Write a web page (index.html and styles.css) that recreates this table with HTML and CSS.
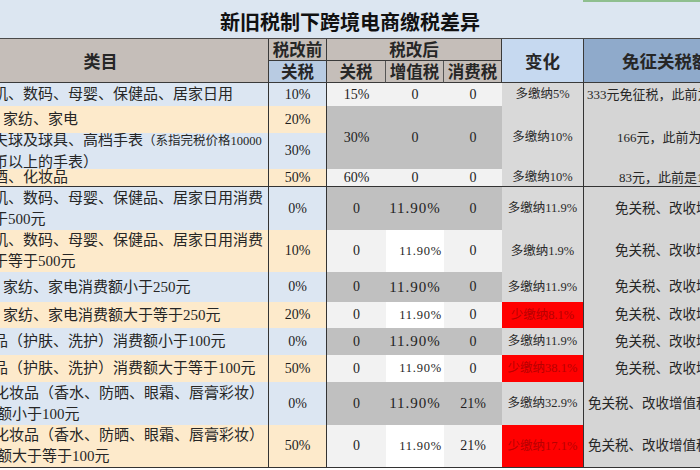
FILE: index.html
```html
<!DOCTYPE html>
<html lang="zh-CN">
<head>
<meta charset="utf-8">
<title>新旧税制下跨境电商缴税差异</title>
<link rel="stylesheet" href="styles.css">
</head>
<body>
<div class="title">新旧税制下跨境电商缴税差异</div>
<div class="sheet">
  <div class="h h-cat">类目</div>
  <div class="h h-grp">税改前</div>
  <div class="h h-grp h-new">税改后</div>
  <div class="h h-chg">变化</div>
  <div class="h h-free">免征关税额度</div>
  <div class="h h-sub h-old">关税</div>
  <div class="h h-sub">关税</div>
  <div class="h h-sub">增值税</div>
  <div class="h h-sub h-last">消费税</div>

  <!-- row 1 -->
  <div class="c cat blue"><span class="ln">手机、数码、母婴、保健品、居家日用</span></div>
  <div class="c old blue">10%</div>
  <div class="c n l">15%</div>
  <div class="c n l">0</div>
  <div class="c n l">0</div>
  <div class="c chg">多缴纳5%</div>
  <div class="c free f-a">333元免征税，此前为500元</div>

  <!-- row 2 -->
  <div class="c cat yel"><span class="ln ln-b">服装、家纺、家电</span></div>
  <div class="c old yel">20%</div>
  <div class="c n g span2">30%</div>
  <div class="c n g span2">0</div>
  <div class="c n g span2">0</div>
  <div class="c chg span2">多缴纳10%</div>
  <div class="c free f-b span2">166元，此前为250元</div>

  <!-- row 3 -->
  <div class="c cat blue"><span class="ln ln-c">高尔夫球及球具、高档手表<small class="note">（系指完税价格10000</small></span><span class="ln">民币以上的手表）</span></div>
  <div class="c old blue">30%</div>

  <!-- row 4 -->
  <div class="c cat yel sep"><span class="ln">烟酒、化妆品</span></div>
  <div class="c old yel sep">50%</div>
  <div class="c n l sep">60%</div>
  <div class="c n l sep">0</div>
  <div class="c n l sep">0</div>
  <div class="c chg sep">多缴纳10%</div>
  <div class="c free f-c sep">83元，此前是100元</div>

  <!-- row 5 -->
  <div class="c cat blue"><span class="ln">手机、数码、母婴、保健品、居家日用消费</span><span class="ln">小于500元</span></div>
  <div class="c old blue">0%</div>
  <div class="c n g">0</div>
  <div class="c n g big">11.90%</div>
  <div class="c n g">0</div>
  <div class="c chg">多缴纳11.9%</div>
  <div class="c free f-d">免关税、改收增值税</div>

  <!-- row 6 -->
  <div class="c cat yel"><span class="ln">手机、数码、母婴、保健品、居家日用消费</span><span class="ln">大于等于500元</span></div>
  <div class="c old yel">10%</div>
  <div class="c n l">0</div>
  <div class="c n w small">11.90%</div>
  <div class="c n l">0</div>
  <div class="c chg">多缴纳1.9%</div>
  <div class="c free f-d">免关税、改收增值税</div>

  <!-- row 7 -->
  <div class="c cat blue"><span class="ln ln-b">服装、家纺、家电消费额小于250元</span></div>
  <div class="c old blue">0%</div>
  <div class="c n g">0</div>
  <div class="c n g big">11.90%</div>
  <div class="c n g">0</div>
  <div class="c chg">多缴纳11.9%</div>
  <div class="c free f-d">免关税、改收增值税</div>

  <!-- row 8 -->
  <div class="c cat yel"><span class="ln ln-b">服装、家纺、家电消费额大于等于250元</span></div>
  <div class="c old yel">20%</div>
  <div class="c n l">0</div>
  <div class="c n w small">11.90%</div>
  <div class="c n l">0</div>
  <div class="c chg red">少缴纳8.1%</div>
  <div class="c free f-d">免关税、改收增值税</div>

  <!-- row 9 -->
  <div class="c cat blue"><span class="ln ln-c">化妆品（护肤、洗护）消费额小于100元</span></div>
  <div class="c old blue">0%</div>
  <div class="c n g">0</div>
  <div class="c n g big">11.90%</div>
  <div class="c n g">0</div>
  <div class="c chg">多缴纳11.9%</div>
  <div class="c free f-d">免关税、改收增值税</div>

  <!-- row 10 -->
  <div class="c cat yel"><span class="ln ln-c">化妆品（护肤、洗护）消费额大于等于100元</span></div>
  <div class="c old yel">50%</div>
  <div class="c n l">0</div>
  <div class="c n w small">11.90%</div>
  <div class="c n l">0</div>
  <div class="c chg red">少缴纳38.1%</div>
  <div class="c free f-d">免关税、改收增值税</div>

  <!-- row 11 -->
  <div class="c cat blue"><span class="ln ln-d">化妆品（香水、防晒、眼霜、唇膏彩妆）</span><span class="ln ln-e">消费额小于100元</span></div>
  <div class="c old blue">0%</div>
  <div class="c n g">0</div>
  <div class="c n g big">11.90%</div>
  <div class="c n g">21%</div>
  <div class="c chg">多缴纳32.9%</div>
  <div class="c free f-e">免关税、改收增值税和消费税</div>

  <!-- row 12 -->
  <div class="c cat yel end"><span class="ln ln-d">化妆品（香水、防晒、眼霜、唇膏彩妆）</span><span class="ln ln-e">消费额大于等于100元</span></div>
  <div class="c old yel end">50%</div>
  <div class="c n l end">0</div>
  <div class="c n w small end">11.90%</div>
  <div class="c n l end">21%</div>
  <div class="c chg red end">少缴纳17.1%</div>
  <div class="c free f-e end">免关税、改收增值税和消费税</div>
</div>
</body>
</html>
```

FILE: styles.css
```css
* { box-sizing: border-box; margin: 0; padding: 0; }

html, body {
  width: 700px;
  height: 470px;
  overflow: hidden;
  background: #ffffff;
}

body {
  font-family: "Liberation Serif", "Noto Sans CJK SC", serif;
  color: #1e1e1e;
}

.title {
  width: 700px;
  height: 39px;
  padding-top: 6px;
  display: flex;
  align-items: center;
  justify-content: center;
  background:
    linear-gradient(to right, transparent 583px, #8fbf8f 583px) top / 100% 2px no-repeat,
    #dce6f1;
  border-bottom: 1px solid #4a4a4a;
  font: 700 20px/1 "Noto Sans CJK SC", sans-serif;
  color: #111;
}

.sheet {
  display: grid;
  width: 772px;
  grid-template-columns: 269px 58px 59px 58px 58px 82px 188px;
  grid-template-rows: 22px 22px 23px 27px 36px 18px 43px 42px 30px 26px 27px 27px 43px 43px;
}

/* header */
.h {
  display: flex;
  align-items: center;
  justify-content: center;
  font: 700 16.5px/1 "Noto Sans CJK SC", sans-serif;
  color: #262626;
  background: #c5beb9;
  border-right: 1px solid #3a3a3a;
  border-bottom: 1px solid #3a3a3a;
}
.h-cat { grid-row: span 2; padding-right: 67px; font-size: 17px; }
.h-new { grid-column: span 3; }
.h-chg { grid-row: span 2; background: #c6d9f0; font-size: 17.5px; }
.h-free {
  grid-row: span 2;
  background: #8faacb;
  border-right: 0;
  justify-content: flex-start;
  padding-left: 38px;
  font-size: 17.5px;
}
.h-sub { border-right-color: #555; }
.h-old { background: #b8cbe2; border-right-color: #3a3a3a; }
.h-last { border-right-color: #3a3a3a; }

/* body cells */
.c {
  display: flex;
  align-items: center;
  justify-content: center;
  overflow: hidden;
  white-space: nowrap;
  font-size: 14px;
  line-height: 1;
}

.span2 { grid-row: span 2; }

.blue { background: #dce6f2; }
.yel { background: #fdeacb; }

.cat {
  flex-direction: column;
  align-items: flex-start;
  justify-content: center;
  gap: 4px;
  border-right: 1px solid #333;
  font-size: 15px;
  color: #262626;
}
.ln { display: block; margin-left: -22px; line-height: 17px; }
.ln-b { margin-left: -42px; }
.ln-c { margin-left: -37px; }
.ln-d { margin-left: -6px; }
.ln-e { margin-left: -33px; }
.note { font-size: 12.5px; }

.old { border-right: 1px solid #333; }

.g { background: #c0c0c0; }
.l { background: #f2f2f2; }
.w { background: #ffffff; }

.big { font-size: 15px; letter-spacing: 1px; }
.small {
  font-size: 12.5px;
  letter-spacing: 0.8px;
  justify-content: flex-end;
  padding-right: 2px;
}

.chg {
  background: #d9d9d9;
  border-right: 1px solid #333;
  font-size: 12.5px;
  color: #2a2a2a;
}
.red { background: #ff0000; color: #b80000; }

.free {
  background: #d5d5d5;
  justify-content: flex-start;
  font-size: 13px;
  color: #262626;
}
.f-a { padding-left: 3px; }
.f-b { padding-left: 33px; }
.f-c { padding-left: 35px; }
.f-d { padding-left: 31px; font-size: 13.5px; }
.f-e { padding-left: 4px; font-size: 13.5px; }

.sep { border-bottom: 1px solid #333; }
.end { border-bottom: 1px solid #333; }
```
